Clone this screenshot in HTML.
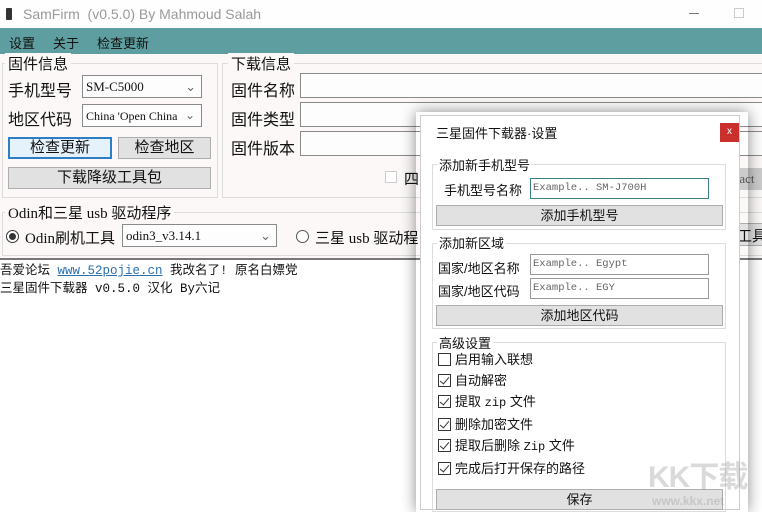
<!DOCTYPE html>
<html><head><meta charset="utf-8"><style>
*{margin:0;padding:0;box-sizing:border-box}
body{width:762px;height:510px;overflow:hidden;background:#fff;position:relative;font-family:"Liberation Sans","Noto Sans CJK SC",sans-serif;color:#111}
.a{position:absolute}
.cn{font-family:"Liberation Serif","Noto Sans CJK SC",sans-serif}
.inp{position:absolute;background:#fdfdfd;border:1px solid #8a8a8a}
.btn{position:absolute;background:#e1e1e1;border:1px solid #adadad;text-align:center;font-size:15px}
.grp{position:absolute;border:1px solid #dcdcdc}
.lg{position:absolute;background:#fbf8f7;padding:0 3px;font-size:15px}
.cb{display:inline-block;width:13px;height:13px;border:1px solid #333;vertical-align:-2px;margin-right:4px;background:#fff;position:relative}
.cb.k:after{content:"";position:absolute;left:3px;top:0px;width:4px;height:8px;border:solid #333;border-width:0 1.5px 1.5px 0;transform:rotate(40deg)}
.mono{font-family:"Liberation Mono","Noto Sans CJK SC",monospace}
</style></head><body>
<div class="a" style="left:0;top:0;width:762px;height:28px;background:#fefefe"></div>
<div class="a" style="left:6px;top:8px;width:6px;height:12px;background:#333;border-radius:1px"></div>
<div class="a" style="left:23px;top:6px;font-size:14px;color:#999">SamFirm&nbsp; (v0.5.0) By Mahmoud Salah</div>
<div class="a" style="left:689px;top:13px;width:10px;height:1px;background:#777"></div>
<div class="a" style="left:734px;top:8px;width:10px;height:10px;border:1px solid #ccc"></div>
<div class="a" style="left:0;top:28px;width:762px;height:26px;background:#5f9ea0"></div>
<div class="a" style="left:9px;top:33px;font-size:13px;color:#111">设置</div>
<div class="a" style="left:53px;top:33px;font-size:13px;color:#111">关于</div>
<div class="a" style="left:97px;top:33px;font-size:13px;color:#111">检查更新</div>
<div class="a" style="left:0;top:54px;width:762px;height:204px;background:#fbf8f7"></div>
<div class="grp" style="left:2px;top:63px;width:216px;height:135px"></div>
<div class="lg" style="left:5px;top:53px">固件信息</div>
<div class="a" style="left:8px;top:77px;font-size:16px">手机型号</div>
<div class="a" style="left:8px;top:106px;font-size:16px">地区代码</div>
<div class="inp cn" style="left:82px;top:75px;width:120px;height:23px;font-size:13px;padding:3px 3px">SM-C5000<span style="position:absolute;right:5px;top:3px;color:#666">⌄</span></div>
<div class="inp cn" style="left:82px;top:104px;width:120px;height:23px;font-size:12px;padding:4px 3px;white-space:nowrap;overflow:hidden">China 'Open China<span style="position:absolute;right:0;top:0;width:20px;height:21px;background:#fdfdfd;color:#666;padding:3px 4px">⌄</span></div>
<div class="btn" style="left:8px;top:137px;width:104px;height:22px;border:2px solid #2d7ec4;background:#e5f1fb;line-height:18px">检查更新</div>
<div class="btn" style="left:118px;top:137px;width:93px;height:22px;line-height:20px">检查地区</div>
<div class="btn" style="left:8px;top:167px;width:203px;height:22px;line-height:20px">下载降级工具包</div>
<div class="grp" style="left:222px;top:63px;width:545px;height:135px"></div>
<div class="lg" style="left:228px;top:53px">下载信息</div>
<div class="a" style="left:231px;top:77px;font-size:16px">固件名称</div>
<div class="a" style="left:231px;top:106px;font-size:16px">固件类型</div>
<div class="a" style="left:231px;top:135px;font-size:16px">固件版本</div>
<div class="inp" style="left:300px;top:73px;width:470px;height:25px"></div>
<div class="inp" style="left:300px;top:102px;width:470px;height:25px"></div>
<div class="inp" style="left:300px;top:131px;width:470px;height:25px"></div>
<div class="a" style="left:385px;top:171px;width:12px;height:12px;border:1px solid #ccc;background:#fff"></div>
<div class="a" style="left:404px;top:168px;font-size:15px">四</div>
<div class="a cn" style="left:735px;top:168px;width:30px;height:22px;background:#ccc;font-size:13px;padding-top:3px;color:#555">ract</div>
<div class="grp" style="left:2px;top:212px;width:770px;height:44px"></div>
<div class="lg cn" style="left:5px;top:202px">Odin和三星 usb 驱动程序</div>
<div class="a" style="left:6px;top:230px;width:13px;height:13px;border:1px solid #333;border-radius:50%;background:#fff"></div>
<div class="a" style="left:9px;top:233px;width:7px;height:7px;border-radius:50%;background:#333"></div>
<div class="a cn" style="left:25px;top:227px;font-size:15px">Odin刷机工具</div>
<div class="inp cn" style="left:122px;top:224px;width:155px;height:23px;font-size:13px;padding:3px 3px">odin3_v3.14.1<span style="position:absolute;right:5px;top:3px;color:#666">⌄</span></div>
<div class="a" style="left:296px;top:230px;width:13px;height:13px;border:1px solid #555;border-radius:50%;background:#fff"></div>
<div class="a cn" style="left:315px;top:227px;font-size:15px;white-space:nowrap">三星 usb 驱动程</div>
<div class="a" style="left:730px;top:223px;width:40px;height:23px;background:#e1e1e1;border:1px solid #adadad;font-size:15px;padding:1px 0 0 6px">工具</div>
<div class="a" style="left:0;top:258px;width:762px;height:2px;background:#777"></div>
<div class="a mono" style="left:0;top:262px;font-size:12.5px;line-height:18px;white-space:nowrap">吾爱论坛 <span style="color:#2a6fb0;text-decoration:underline">www.52pojie.cn</span> 我改名了! 原名白嫖党<br>三星固件下载器 v0.5.0 汉化 By六记</div>
<div class="a" style="left:416px;top:112px;width:332px;height:400px;box-shadow:0 0 14px rgba(0,0,0,.45)"></div>
<div class="a" style="left:420px;top:115px;width:320px;height:395px;background:#fff;border:1px solid #ccc"></div>
<div class="a" style="left:436px;top:123px;font-size:13px">三星固件下载器·设置</div>
<div class="a" style="left:720px;top:123px;width:19px;height:19px;background:#c9302c;color:#fff;font-size:10px;text-align:center;line-height:18px">x</div>
<div class="grp" style="left:432px;top:164px;width:294px;height:66px"></div>
<div class="a" style="left:437px;top:155px;font-size:13px;background:#fff;padding:0 2px">添加新手机型号</div>
<div class="a" style="left:444px;top:180px;font-size:13px">手机型号名称</div>
<div class="a mono" style="left:530px;top:178px;width:179px;height:21px;border:1px solid #3c7e85;font-size:10.5px;color:#666;padding:3px 2px">Example..  SM-J700H</div>
<div class="btn" style="left:436px;top:205px;width:287px;height:21px;font-size:13px;line-height:19px">添加手机型号</div>
<div class="grp" style="left:432px;top:243px;width:294px;height:86px"></div>
<div class="a" style="left:437px;top:233px;font-size:13px;background:#fff;padding:0 2px">添加新区域</div>
<div class="a" style="left:438px;top:258px;font-size:13px">国家/地区名称</div>
<div class="a" style="left:438px;top:281px;font-size:13px">国家/地区代码</div>
<div class="a mono" style="left:530px;top:254px;width:179px;height:21px;border:1px solid #999;font-size:10.5px;color:#666;padding:3px 2px">Example..  Egypt</div>
<div class="a mono" style="left:530px;top:278px;width:179px;height:21px;border:1px solid #999;font-size:10.5px;color:#666;padding:3px 2px">Example..  EGY</div>
<div class="btn" style="left:436px;top:305px;width:287px;height:21px;font-size:13px;line-height:19px">添加地区代码</div>
<div class="grp" style="left:432px;top:342px;width:294px;height:170px"></div>
<div class="a" style="left:437px;top:333px;font-size:13px;background:#fff;padding:0 2px">高级设置</div>
<div class="a" style="left:438px;top:349px;font-size:13px;line-height:21px;white-space:nowrap">
<div><span class="cb"></span>启用输入联想</div>
<div><span class="cb k"></span>自动解密</div>
<div><span class="cb k"></span>提取 <span class="mono" style="font-size:12px">zip</span> 文件</div>
<div><span class="cb k"></span>删除加密文件</div>
<div><span class="cb k"></span>提取后删除 <span class="mono" style="font-size:12px">Zip</span> 文件</div>
<div><span class="cb k"></span>完成后打开保存的路径</div>
</div>
<div class="btn" style="left:436px;top:489px;width:287px;height:21px;font-size:13px;line-height:19px">保存</div>
<div class="a" style="left:648px;top:452px;font-size:30px;font-weight:bold;color:rgba(150,150,150,.35);letter-spacing:-1px">KK下载</div>
<div class="a" style="left:652px;top:494px;font-size:12px;font-weight:bold;color:rgba(150,150,150,.35)">www.kkx.net</div>
</body></html>
